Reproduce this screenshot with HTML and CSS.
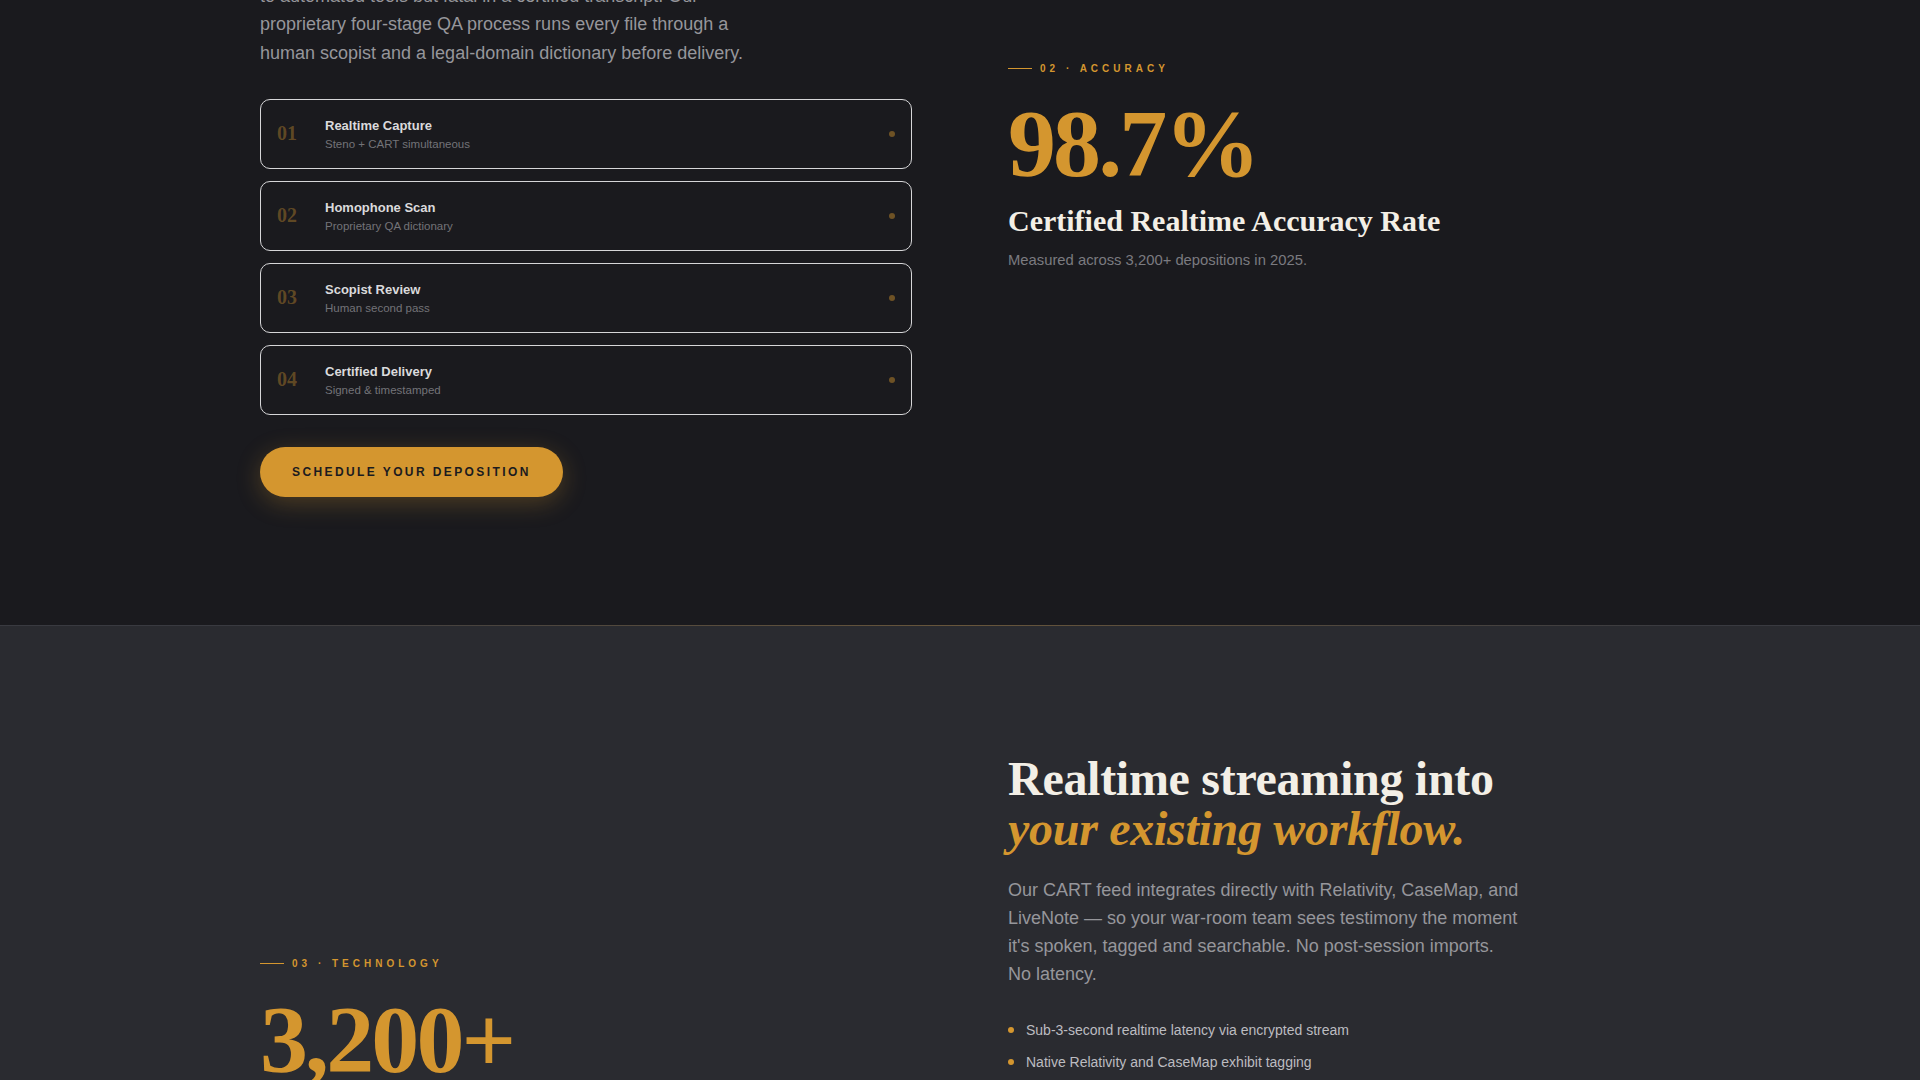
FILE: index.html
```html
<!DOCTYPE html>
<html lang="en">
<head>
<meta charset="utf-8">
<title>Realtime Court Reporting</title>
<link rel="stylesheet" href="styles.css">
</head>
<body>
<section class="process">
  <div class="grid">
    <div class="process-main">
      <p class="lead">to automated tools but fatal in a certified transcript. Our proprietary four-stage QA process runs every file through a human scopist and a legal-domain dictionary before delivery.</p>
      <ol class="steps">
        <li class="step">
          <span class="step-num">01</span>
          <div class="step-text"><span class="step-title">Realtime Capture</span><span class="step-sub">Steno + CART simultaneous</span></div>
          <span class="step-dot"></span>
        </li>
        <li class="step">
          <span class="step-num">02</span>
          <div class="step-text"><span class="step-title">Homophone Scan</span><span class="step-sub">Proprietary QA dictionary</span></div>
          <span class="step-dot"></span>
        </li>
        <li class="step">
          <span class="step-num">03</span>
          <div class="step-text"><span class="step-title">Scopist Review</span><span class="step-sub">Human second pass</span></div>
          <span class="step-dot"></span>
        </li>
        <li class="step">
          <span class="step-num">04</span>
          <div class="step-text"><span class="step-title">Certified Delivery</span><span class="step-sub">Signed &amp; timestamped</span></div>
          <span class="step-dot"></span>
        </li>
      </ol>
      <a class="btn" href="#">SCHEDULE YOUR DEPOSITION</a>
    </div>
    <div class="stat stat-accuracy">
      <div class="eyebrow"><span class="eyebrow-line"></span>02 · ACCURACY</div>
      <div class="stat-num">98.7%</div>
      <h3 class="stat-title">Certified Realtime Accuracy Rate</h3>
      <p class="stat-note">Measured across 3,200+ depositions in 2025.</p>
    </div>
  </div>
</section>
<section class="tech">
  <div class="grid">
    <div class="stat tech-stat">
      <div class="eyebrow"><span class="eyebrow-line"></span>03 · TECHNOLOGY</div>
      <div class="stat-num">3,200+</div>
    </div>
    <div class="tech-main">
      <h2 class="tech-title">Realtime streaming into <em>your existing workflow.</em></h2>
      <p class="tech-copy">Our CART feed integrates directly with Relativity, CaseMap, and LiveNote — so your war-room team sees testimony the moment it's spoken, tagged and searchable. No post-session imports. No latency.</p>
      <ul class="tech-list">
        <li>Sub-3-second realtime latency via encrypted stream</li>
        <li>Native Relativity and CaseMap exhibit tagging</li>
      </ul>
    </div>
  </div>
</section>
</body>
</html>
```
FILE: styles.css
```css
html, body {
  margin: 0;
  padding: 0;
}
body {
  background: #1a1a1e;
  font-family: "Liberation Sans", Arial, sans-serif;
  color: #96969b;
}

.grid {
  max-width: 1400px;
  margin: 0 auto;
  display: grid;
  grid-template-columns: 1fr 1fr;
  column-gap: 96px;
  align-items: start;
}

/* ---------- Process section ---------- */
.process {
  margin-top: -18px;
  padding-bottom: 128px;
}

.lead {
  margin: 0;
  max-width: 512px;
  font-size: 18px;
  line-height: 1.57;
  color: #96969b;
}

.steps {
  list-style: none;
  margin: 32px 0 0;
  padding: 0;
  display: flex;
  flex-direction: column;
  gap: 12px;
}

.step {
  height: 70px;
  box-sizing: border-box;
  border: 1px solid #d6d6d8;
  border-radius: 10px;
  display: flex;
  align-items: center;
  padding: 0 16px;
}

.step-num {
  width: 32px;
  margin-right: 16px;
  font-family: "Liberation Serif", "Times New Roman", serif;
  font-weight: 700;
  font-size: 20px;
  color: rgba(212, 150, 47, 0.38);
}

.step-text {
  display: flex;
  flex-direction: column;
  gap: 3px;
  padding-top: 2px;
}

.step-title {
  font-size: 13px;
  font-weight: 700;
  line-height: 16px;
  color: #dadadc;
}

.step-sub {
  font-size: 11.5px;
  line-height: 14px;
  color: #737378;
}

.step-dot {
  margin-left: auto;
  width: 6px;
  height: 6px;
  border-radius: 50%;
  background: rgba(212, 150, 47, 0.45);
}

.btn {
  display: flex;
  align-items: center;
  width: max-content;
  height: 50px;
  box-sizing: border-box;
  padding: 0 32px;
  margin-top: 32px;
  border-radius: 999px;
  background: #d4962f;
  color: #1b1b1f;
  font-size: 12px;
  font-weight: 700;
  letter-spacing: 0.2em;
  text-decoration: none;
  box-shadow: 0 6px 24px rgba(212, 150, 47, 0.28);
}

/* ---------- Stats ---------- */
.stat-accuracy {
  padding-top: 78px;
}

.eyebrow {
  display: flex;
  align-items: center;
  gap: 8px;
  height: 16px;
  font-size: 10px;
  font-weight: 700;
  letter-spacing: 0.4em;
  color: #d4962f;
}

.eyebrow-line {
  width: 24px;
  height: 1px;
  background: #d4962f;
}

.stat-num {
  margin-top: 20px;
  font-family: "Liberation Serif", "Times New Roman", serif;
  font-weight: 700;
  font-size: 96px;
  line-height: 1;
  letter-spacing: -0.03em;
  color: #d4962f;
}

.stat-title {
  margin: 11px 0 0;
  font-family: "Liberation Serif", "Times New Roman", serif;
  font-weight: 700;
  font-size: 30px;
  line-height: 1.2;
  color: #f3efe6;
}

.stat-note {
  margin: 10px 0 0;
  font-size: 14.8px;
  line-height: 1.5;
  color: #7b7b80;
}

/* ---------- Tech section ---------- */
.tech {
  position: relative;
  background: #2a2b30;
  border-top: 1px solid #393a40;
  padding: 128px 0;
}

.tech::before {
  content: "";
  position: absolute;
  left: 0;
  right: 0;
  top: -1px;
  height: 1px;
  background: linear-gradient(90deg, rgba(212, 150, 47, 0) 12%, rgba(212, 150, 47, 0.3) 50%, rgba(212, 150, 47, 0) 88%);
}

.tech-stat {
  margin-top: 202px;
}

.tech-title {
  margin: 0;
  font-family: "Liberation Serif", "Times New Roman", serif;
  font-weight: 700;
  font-size: 48px;
  line-height: 1.05;
  letter-spacing: -0.006em;
  color: #f3efe6;
}

.tech-title em {
  display: block;
  font-style: italic;
  color: #d4962f;
}

.tech-copy {
  margin: 21px 0 0;
  max-width: 512px;
  font-size: 18px;
  line-height: 1.57;
  color: #96969b;
}

.tech-list {
  list-style: none;
  margin: 30px 0 0;
  padding: 0;
  display: flex;
  flex-direction: column;
  gap: 10px;
}

.tech-list li {
  display: flex;
  align-items: center;
  gap: 12px;
  font-size: 14px;
  line-height: 22px;
  color: #bcbcc0;
}

.tech-list li::before {
  content: "";
  flex: none;
  width: 6px;
  height: 6px;
  border-radius: 50%;
  background: #d4962f;
}
```
